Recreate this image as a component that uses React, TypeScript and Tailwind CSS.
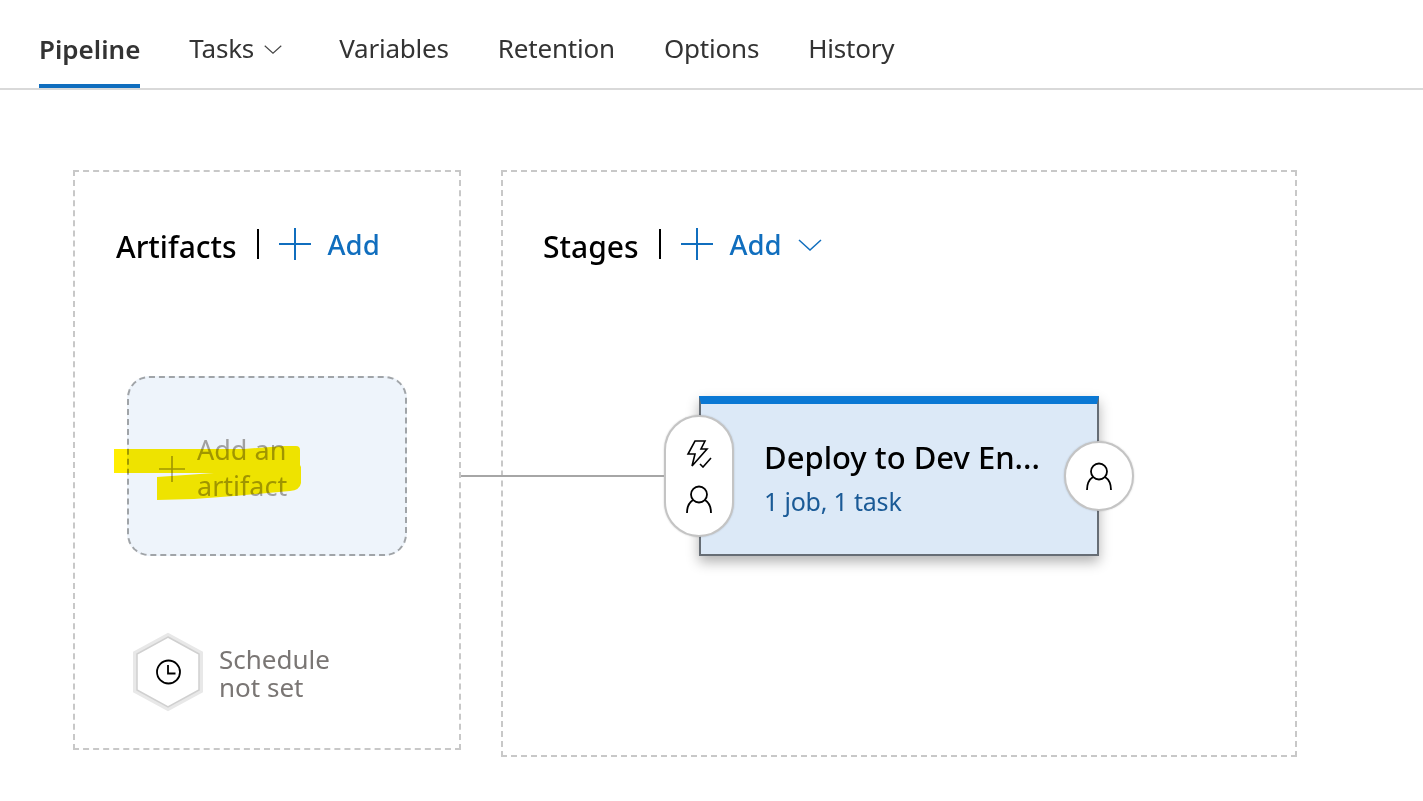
const FONT = 'font-["Noto_Sans","Open_Sans",sans-serif]';

const tabs = ['Tasks', 'Variables', 'Retention', 'Options', 'History'];

function PlusIcon({ className }: { className?: string }) {
  return (
    <svg viewBox="0 0 32 32" className={className} fill="none" stroke="currentColor" strokeWidth="2">
      <path d="M0 16H32M16 0V32" />
    </svg>
  );
}

function Chevron({ className }: { className?: string }) {
  return (
    <svg viewBox="0 0 24 12" className={className} fill="none" stroke="currentColor" strokeWidth="1.500">
      <path d="M1 1 12 11 23 1" />
    </svg>
  );
}

function PersonIcon() {
  return (
    <svg viewBox="0 0 26 28" className="h-[28px] w-[26px]" fill="none" stroke="#000" strokeWidth="1.8">
      <circle cx="13" cy="9.500" r="8" />
      <path d="M1 28C1 22 3 17.500 7 15M19 15C23 17.500 25 22 25 28" />
    </svg>
  );
}

function TriggerIcon() {
  return (
    <svg viewBox="0 0 28 28" className="h-[28px] w-[28px]" fill="none" stroke="#000" strokeWidth="1.6">
      <path d="M10 1h10l-4 8h6L7 26l3-12H3z" strokeLinejoin="miter" />
      <path d="M15 24l3 3 8-9" />
    </svg>
  );
}

function SectionHeader({ title, chevron }: { title: string; chevron?: boolean }) {
  return (
    <div className="flex items-start">
      <span className="text-[30px] leading-[38px] font-medium text-black">{title}</span>
      <span className="mt-[1px] ml-[20px] h-[30px] w-[2px] bg-black" />
      <PlusIcon className="ml-[20px] h-[32px] w-[32px] text-[#106ebe]" />
      <span className="mt-[-1px] ml-[17px] text-[27.5px] leading-[36px] font-medium text-[#106ebe]">Add</span>
      {chevron && <Chevron className="mt-[11px] ml-[16px] h-[12px] w-[24px] text-[#106ebe]" />}
    </div>
  );
}

export default function App() {
  return (
    <div className={`relative h-[801px] w-full overflow-hidden bg-white ${FONT}`}>
      <nav className="flex h-[90px] items-stretch border-b-2 border-[#d9d9d9] pl-[39px] text-[26px] tracking-[-0.2px] text-[#333]">
        <div className="mr-[49px] flex items-center border-b-4 border-[#106ebe] pt-[15px] font-semibold tracking-normal">Pipeline</div>
        {tabs.map((tab) => (
          <div key={tab} className="mr-[49px] flex items-center pt-[8px]">
            {tab}
            {tab === 'Tasks' && <Chevron className="mt-[2px] ml-[10px] mr-[8px] h-[9px] w-[18px] text-[#444]" />}
          </div>
        ))}
      </nav>

      <main className="relative flex items-start gap-[40px] pl-[73px] pt-[80px]">
        {/* Artifacts */}
        <section className="flex h-[580px] w-[388px] flex-col border-2 border-dashed border-[#c8c8c8] pl-[41px] pt-[56px]">
          <SectionHeader title="Artifacts" />
          <div className="mt-[110px] ml-[11px] flex h-[180px] w-[280px] items-center rounded-[22px] border-2 border-dashed border-[#a0a4a8] bg-[#eef4fb] pl-[30px] text-[#a0a0a0]">
            <PlusIcon className="mt-[6px] h-[26px] w-[26px]" />
            <span className="mt-[4px] ml-[12px] w-[110px] text-[27px] leading-[36px]">Add an artifact</span>
          </div>
          <div className="mt-[76px] ml-[16px] flex items-center">
            <svg viewBox="0 0 72 80" className="h-[80px] w-[72px]" fill="none">
              <path d="M36 3 69 21V59L36 77 3 59V21Z" stroke="#e8e8e8" strokeWidth="4" />
              <path d="M36 5 67 22V58L36 75 5 58V22Z" stroke="#d0d0d0" strokeWidth="1.500" />
              <circle cx="36.500" cy="40" r="11.500" stroke="#000" strokeWidth="1.800" />
              <path d="M36 33V41.500H43.500" stroke="#000" strokeWidth="1.800" />
            </svg>
            <span className="mt-[1px] ml-[15px] w-[130px] text-[26px] leading-[28px] text-[#7a7674]">Schedule not set</span>
          </div>
        </section>

        {/* Stages */}
        <section className="h-[587px] w-[796px] border-2 border-dashed border-[#c8c8c8] pl-[40px] pt-[56px]">
          <SectionHeader title="Stages" chevron />
          <div className="relative mt-[130px] ml-[156px] h-[160px] w-[400px] border-x-2 border-b-2 border-t-[8px] border-x-[#666d75] border-b-[#666d75] border-t-[#0a78d4] bg-[#dce9f7] pl-[63px] pt-[33px] shadow-[0_6px_12px_rgba(0,0,0,0.3)]">
            <div className="text-[31px] leading-[40px] font-medium text-black whitespace-nowrap">Deploy to Dev En...</div>
            <div className="mt-[7px] text-[25px] leading-[34px] tracking-[-0.2px] text-[#1a5a96]">1 job, 1 task</div>
            {/* pre-deployment pill */}
            <div className="absolute left-[-37px] top-[11px] flex h-[122px] w-[70px] flex-col items-center justify-center gap-[17px] rounded-[35px] border-2 border-[#c4c4c4] bg-white shadow-[0_0_2px_rgba(0,0,0,0.2)]">
              <TriggerIcon />
              <PersonIcon />
            </div>
            {/* post-deployment circle */}
            <div className="absolute right-[-37px] top-[37px] flex h-[70px] w-[70px] items-center justify-center rounded-full border-2 border-[#c4c4c4] bg-white shadow-[0_0_2px_rgba(0,0,0,0.2)]">
              <PersonIcon />
            </div>
          </div>
        </section>

        {/* connector between the artifact and the stage */}
        <div className="absolute left-[461px] top-[385px] h-[2px] w-[203px] bg-[#a6a6a6]" />
      </main>

      {/* yellow marker scribble on the screenshot */}
      <svg className="pointer-events-none absolute left-[114px] top-[445px] mix-blend-multiply" width="190" height="56" viewBox="0 0 190 56">
        <path d="M0 4H130L170 1H182Q186 1 186 5V20L187 22V38Q186 45 176 46L120 51 80 54 43 55V32L100 28H0Z" fill="#ffee00" />
      </svg>
    </div>
  );
}
